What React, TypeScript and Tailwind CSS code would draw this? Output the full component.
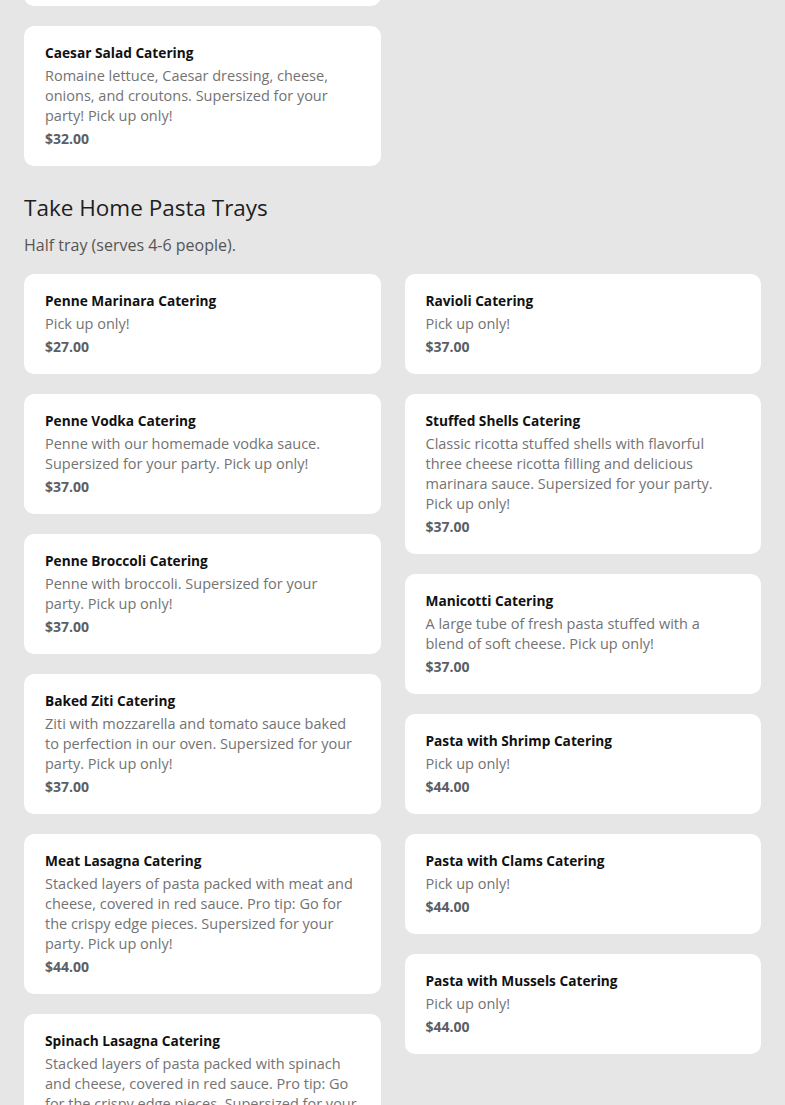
import React from "react";

type Item = { name: string; desc: string; price: string };

const left: Item[] = [
  { name: "Penne Marinara Catering", desc: "Pick up only!", price: "$27.00" },
  { name: "Penne Vodka Catering", desc: "Penne with our homemade vodka sauce. Supersized for your party. Pick up only!", price: "$37.00" },
  { name: "Penne Broccoli Catering", desc: "Penne with broccoli. Supersized for your party. Pick up only!", price: "$37.00" },
  { name: "Baked Ziti Catering", desc: "Ziti with mozzarella and tomato sauce baked to perfection in our oven. Supersized for your party. Pick up only!", price: "$37.00" },
  { name: "Meat Lasagna Catering", desc: "Stacked layers of pasta packed with meat and cheese, covered in red sauce. Pro tip: Go for the crispy edge pieces. Supersized for your party. Pick up only!", price: "$44.00" },
  { name: "Spinach Lasagna Catering", desc: "Stacked layers of pasta packed with spinach and cheese, covered in red sauce. Pro tip: Go for the crispy edge pieces. Supersized for your party. Pick up only!", price: "$44.00" },
];

const right: Item[] = [
  { name: "Ravioli Catering", desc: "Pick up only!", price: "$37.00" },
  { name: "Stuffed Shells Catering", desc: "Classic ricotta stuffed shells with flavorful three cheese ricotta filling and delicious marinara sauce. Supersized for your party. Pick up only!", price: "$37.00" },
  { name: "Manicotti Catering", desc: "A large tube of fresh pasta stuffed with a blend of soft cheese. Pick up only!", price: "$37.00" },
  { name: "Pasta with Shrimp Catering", desc: "Pick up only!", price: "$44.00" },
  { name: "Pasta with Clams Catering", desc: "Pick up only!", price: "$44.00" },
  { name: "Pasta with Mussels Catering", desc: "Pick up only!", price: "$44.00" },
];

function Card({ item }: { item: Item }) {
  return (
    <div className="bg-white rounded-[10px] pl-[21px] pr-[22px] pt-[17px] pb-[17px] flex flex-col gap-[3px]">
      <div className="text-[13.7px] leading-[20px] font-bold text-[#111111]">{item.name}</div>
      <div className="text-[14.5px] leading-[20px] text-[#737373]">{item.desc}</div>
      <div className="text-[14px] leading-[20px] font-bold text-[#5a5e66]">{item.price}</div>
    </div>
  );
}

export default function App() {
  return (
    <div
      className="min-h-[1105px] bg-[#e6e6e6] px-6 pb-10 overflow-hidden"
      style={{ fontFamily: '"Open Sans", "Noto Sans", sans-serif' }}
    >
      <div className="flex gap-6 -mt-[94px]">
        <div className="flex-1 flex flex-col gap-5">
          <Card item={{ name: "Garden Salad Catering", desc: "Pick up only!", price: "$30.00" }} />
          <Card
            item={{
              name: "Caesar Salad Catering",
              desc: "Romaine lettuce, Caesar dressing, cheese, onions, and croutons. Supersized for your party! Pick up only!",
              price: "$32.00",
            }}
          />
        </div>
        <div className="flex-1" />
      </div>

      <h2 className="mt-[26px] text-[22.5px] leading-[32px] font-normal text-[#1e1e1e]">Take Home Pasta Trays</h2>
      <p className="mt-[9px] text-[16px] leading-[24px] text-[#555555]">Half tray (serves 4-6 people).</p>

      <div className="mt-[17px] flex gap-6 items-start">
        <div className="flex-1 flex flex-col gap-5">
          {left.map((it) => (
            <Card key={it.name} item={it} />
          ))}
        </div>
        <div className="flex-1 flex flex-col gap-5">
          {right.map((it) => (
            <Card key={it.name} item={it} />
          ))}
        </div>
      </div>
    </div>
  );
}
